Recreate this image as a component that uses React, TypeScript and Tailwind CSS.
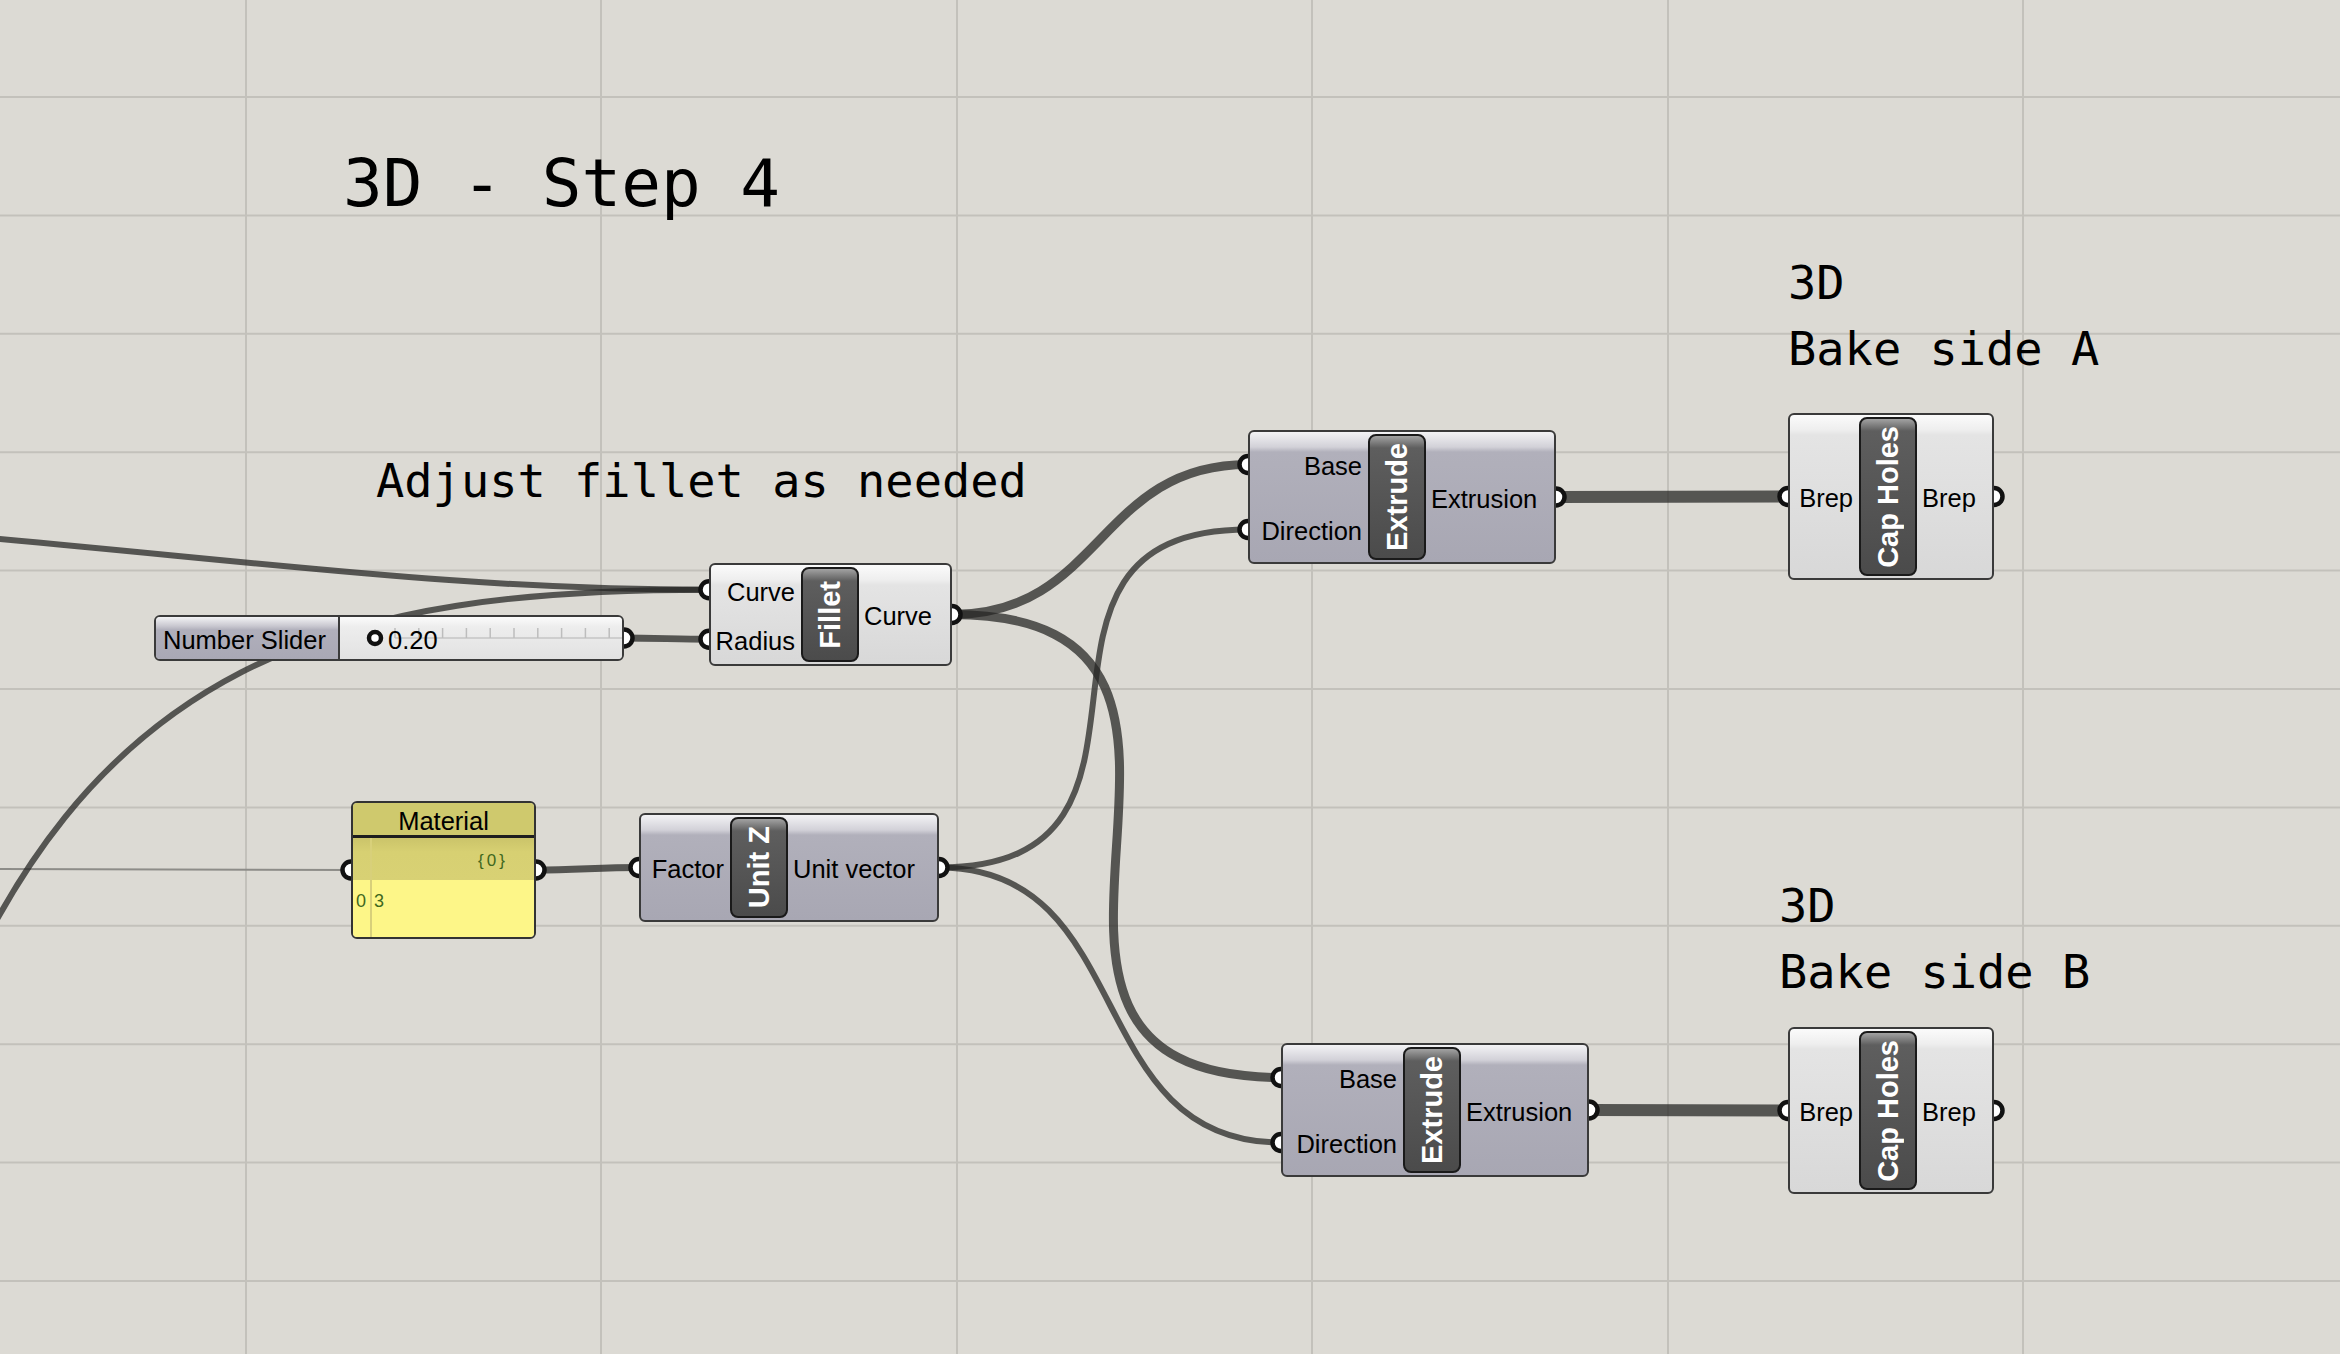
import React from 'react';

type Tone = 'light' | 'dark';

type GhNode = {
  id: string;
  x: number;
  y: number;
  w: number;
  h: number;
  left: number;
  label: string;
  inputs: string[];
  outputs: string[];
  tone: Tone;
};

const nodes: GhNode[] = [
  { id: 'fillet', x: 709, y: 563, w: 243, h: 103, left: 92, label: 'Fillet', inputs: ['Curve', 'Radius'], outputs: ['Curve'], tone: 'light' },
  { id: 'extrudeA', x: 1248, y: 430, w: 308, h: 134, left: 120, label: 'Extrude', inputs: ['Base', 'Direction'], outputs: ['Extrusion'], tone: 'dark' },
  { id: 'capA', x: 1788, y: 413, w: 206, h: 167, left: 71, label: 'Cap Holes', inputs: ['Brep'], outputs: ['Brep'], tone: 'light' },
  { id: 'unitZ', x: 639, y: 813, w: 300, h: 109, left: 91, label: 'Unit Z', inputs: ['Factor'], outputs: ['Unit vector'], tone: 'dark' },
  { id: 'extrudeB', x: 1281, y: 1043, w: 308, h: 134, left: 122, label: 'Extrude', inputs: ['Base', 'Direction'], outputs: ['Extrusion'], tone: 'dark' },
  { id: 'capB', x: 1788, y: 1027, w: 206, h: 167, left: 71, label: 'Cap Holes', inputs: ['Brep'], outputs: ['Brep'], tone: 'light' },
];

const byId: Record<string, GhNode> = Object.fromEntries(nodes.map((n) => [n.id, n]));

// grip centre on the node edge
function pin(id: string, side: 'in' | 'out', i = 0): [number, number] {
  const n = byId[id];
  const count = side === 'in' ? n.inputs.length : n.outputs.length;
  const y = n.y + 2 + ((i + 0.5) * (n.h - 4)) / count;
  return [side === 'in' ? n.x : n.x + n.w, y];
}

function bezier(a: [number, number], b: [number, number], d: number) {
  return `M ${a[0]} ${a[1]} C ${a[0] + d} ${a[1]}, ${b[0] - d} ${b[1]}, ${b[0]} ${b[1]}`;
}

const sliderOut: [number, number] = [624, 638];
const materialIn: [number, number] = [351, 870];
const materialOut: [number, number] = [536, 870];

const filletCurve = pin('fillet', 'in', 0);

const wires: { d: string; w: number }[] = [
  { d: `M -100 530 C 250 560, 450 ${filletCurve[1]}, ${filletCurve[0]} ${filletCurve[1]}`, w: 6 },
  { d: `M -70 1070 C 80 650, 350 ${filletCurve[1]}, ${filletCurve[0]} ${filletCurve[1]}`, w: 6 },
  { d: bezier(sliderOut, pin('fillet', 'in', 1), 30), w: 7 },
  { d: bezier(materialOut, pin('unitZ', 'in', 0), 40), w: 7 },
  { d: bezier(pin('fillet', 'out'), pin('extrudeA', 'in', 0), 150), w: 9 },
  { d: bezier(pin('fillet', 'out'), pin('extrudeB', 'in', 0), 360), w: 9 },
  { d: bezier(pin('unitZ', 'out'), pin('extrudeA', 'in', 1), 270), w: 6 },
  { d: bezier(pin('unitZ', 'out'), pin('extrudeB', 'in', 1), 200), w: 6 },
  { d: bezier(pin('extrudeA', 'out'), pin('capA', 'in'), 60), w: 12 },
  { d: bezier(pin('extrudeB', 'out'), pin('capB', 'in'), 60), w: 12 },
];

const grips: [number, number][] = [
  sliderOut,
  materialIn,
  materialOut,
  ...nodes.flatMap((n) => [
    ...n.inputs.map((_, i) => pin(n.id, 'in', i)),
    ...n.outputs.map((_, i) => pin(n.id, 'out', i)),
  ]),
];

const gridX = [246, 601, 957, 1312, 1668, 2023];
const gridY = Array.from({ length: 12 }, (_, i) => 97 + i * 118.4);

function Canvas() {
  return (
    <svg className="absolute inset-0" width={2340} height={1354} viewBox="0 0 2340 1354">
      {gridX.map((x) => (
        <line key={`x${x}`} x1={x} y1={0} x2={x} y2={1354} stroke="#c3c1bb" strokeWidth={2} />
      ))}
      {gridY.map((y) => (
        <line key={`y${y}`} x1={0} y1={y} x2={2340} y2={y} stroke="#c3c1bb" strokeWidth={2} />
      ))}
      <line x1={0} y1={869} x2={351} y2={870} stroke="#8d8c88" strokeWidth={2} />
      {wires.map((w, i) => (
        <path key={i} d={w.d} fill="none" stroke="#262624" strokeOpacity={0.74} strokeWidth={w.w} />
      ))}
      {grips.map(([x, y], i) => (
        <circle key={i} cx={x} cy={y} r={8.5} fill="#ffffff" stroke="#111111" strokeWidth={4.5} />
      ))}
    </svg>
  );
}

function Component({ n }: { n: GhNode }) {
  const body =
    n.tone === 'dark'
      ? 'bg-[linear-gradient(to_bottom,#f3f3f5_0px,#d2d1d8_15px,#b1b0bb_20px,#a8a7b3_100%)]'
      : 'bg-[linear-gradient(to_bottom,#fbfbfb_0px,#eeeeee_15px,#e4e4e4_20px,#d8d8d8_100%)]';
  return (
    <div
      className={`absolute flex rounded-[6px] border-2 border-[#3a3a3a] ${body} font-['Liberation_Sans',sans-serif] text-[25.5px] text-black`}
      style={{ left: n.x, top: n.y, width: n.w, height: n.h }}
    >
      <div className="flex flex-col" style={{ width: n.left - 2 }}>
        {n.inputs.map((p) => (
          <div key={p} className="flex flex-1 items-center justify-end whitespace-nowrap pr-[6px] pt-[4px]">
            {p}
          </div>
        ))}
      </div>
      <div className="my-[2px] flex w-[58px] shrink-0 items-center justify-center rounded-[8px] border-2 border-[#1a1a1a] bg-[linear-gradient(to_bottom,#a2a2a2_0px,#5e5e5e_12px,#4b4b4b_100%)]">
        <span className="rotate-180 whitespace-nowrap text-[29px] font-bold leading-none text-white [writing-mode:vertical-rl]">
          {n.label}
        </span>
      </div>
      <div className="flex flex-1 flex-col">
        {n.outputs.map((p) => (
          <div key={p} className="flex flex-1 items-center whitespace-nowrap pl-[5px] pt-[4px]">
            {p}
          </div>
        ))}
      </div>
    </div>
  );
}

function NumberSlider() {
  const ticks = Array.from({ length: 11 }, (_, i) => 55 + i * 23.8);
  return (
    <div className="absolute left-[154px] top-[615px] flex h-[46px] w-[470px] overflow-hidden rounded-[6px] border-2 border-[#3a3a3a] font-['Liberation_Sans',sans-serif] text-[25.5px] text-black">
      <div className="flex w-[184px] items-center whitespace-nowrap border-r-2 border-[#3a3a3a] bg-[linear-gradient(to_bottom,#f3f3f5_0px,#c9c8d0_9px,#b0afbb_13px,#a9a8b5_100%)] pl-[7px] pt-[4px]">
        Number Slider
      </div>
      <div className="relative flex flex-1 items-center bg-[linear-gradient(to_bottom,#fbfbfb_0px,#ededed_10px,#e2e2e2_100%)] pl-[48px] pt-[4px]">
        <svg className="absolute left-0 top-0" width={282} height={42} viewBox="0 0 282 42">
          <line x1={55} y1={21} x2={293} y2={21} stroke="#c4c4c4" strokeWidth={1.5} />
          {ticks.map((x) => (
            <line key={x} x1={x} y1={11} x2={x} y2={21} stroke="#bdbdbd" strokeWidth={1.5} />
          ))}
          <circle cx={35} cy={21} r={6} fill="#ffffff" stroke="#111111" strokeWidth={4.5} />
        </svg>
        <span className="relative">0.20</span>
      </div>
    </div>
  );
}

function MaterialPanel() {
  return (
    <div className="absolute left-[351px] top-[801px] flex h-[138px] w-[185px] flex-col overflow-hidden rounded-[6px] border-2 border-[#333333] font-['Liberation_Sans',sans-serif]">
      <div className="flex h-[35px] items-center justify-center border-b-[3px] border-[#1e1e1e] bg-[#cfc96d] pt-[5px] text-[25.5px] text-black">
        Material
      </div>
      <div className="relative flex-1 bg-[#fdf688]">
        <div className="h-[42px] bg-[linear-gradient(to_bottom,#cbc46a_0px,#d7d072_14px,#d8d174_100%)]" />
        <div className="absolute bottom-0 left-[17px] top-0 w-[2px] bg-[#d8d07a]" />
        <span className="absolute left-[125px] top-[10px] text-[17px] tracking-[3px] text-[#3f6820]">{'{0}'}</span>
        <span className="absolute left-[3px] top-[50px] text-[18px] text-[#3f6820]">0</span>
        <span className="absolute left-[21px] top-[50px] text-[18px] text-[#3f6820]">3</span>
      </div>
    </div>
  );
}

export default function App() {
  return (
    <div className="relative h-[1354px] w-[2340px] overflow-hidden bg-[#dcdad4]">
      <Canvas />

      <div className="absolute left-[343px] top-[151px] whitespace-pre font-['DejaVu_Sans_Mono',monospace] text-[66px] leading-none text-black">
        3D - Step 4
      </div>
      <div className="absolute left-[376px] top-[457px] whitespace-pre font-['DejaVu_Sans_Mono',monospace] text-[47px] leading-none text-black">
        Adjust fillet as needed
      </div>
      <div className="absolute left-[1788px] top-[250px] whitespace-pre font-['DejaVu_Sans_Mono',monospace] text-[47px] leading-[66px] text-black">
        {'3D\nBake side A'}
      </div>
      <div className="absolute left-[1779px] top-[873px] whitespace-pre font-['DejaVu_Sans_Mono',monospace] text-[47px] leading-[66px] text-black">
        {'3D\nBake side B'}
      </div>

      <NumberSlider />
      <MaterialPanel />
      {nodes.map((n) => (
        <Component key={n.id} n={n} />
      ))}
    </div>
  );
}
